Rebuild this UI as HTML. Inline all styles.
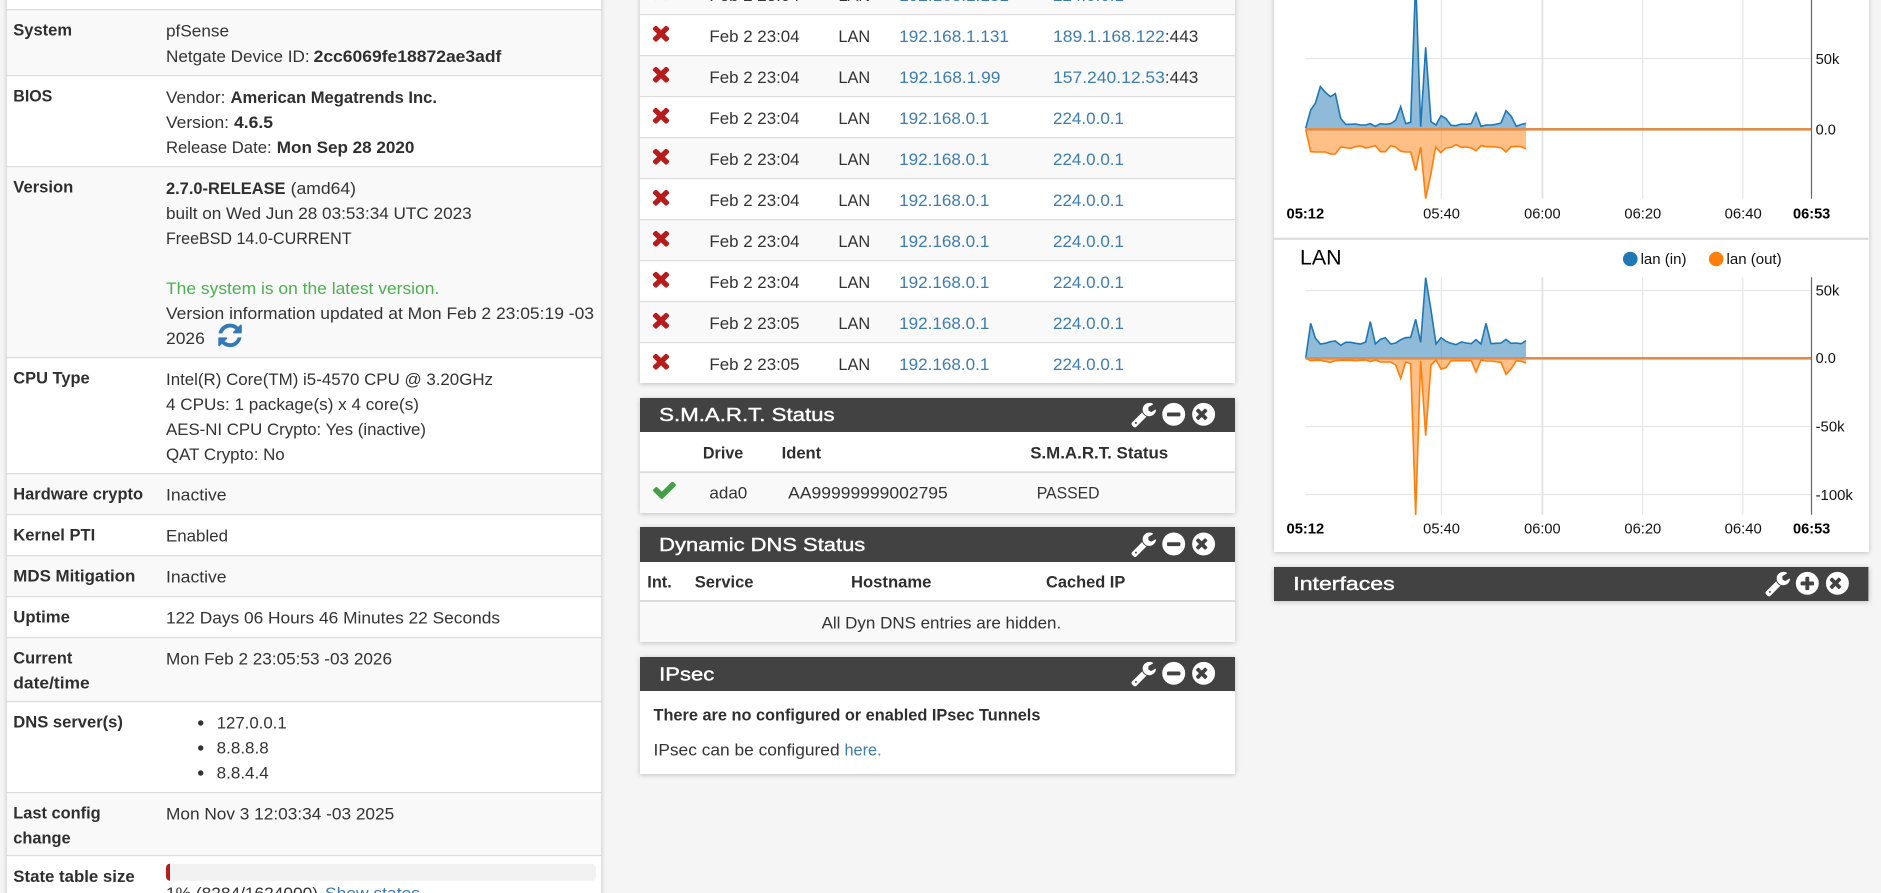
<!DOCTYPE html>
<html lang="en">
<head>
<meta charset="utf-8">
<title>pfSense Dashboard</title>
<style>
html,body{margin:0;padding:0;width:1881px;height:893px;overflow:hidden;background:#f5f5f5}
#r{position:relative;width:1881px;height:893px;overflow:hidden;background:#f5f5f5}
.p{position:absolute;background:#fff;box-shadow:0 1px 5px rgba(0,0,0,.22)}
svg{position:absolute;left:0;top:0}
text{font-family:"Liberation Sans",Arial,sans-serif;font-size:16.8px;fill:#333}
text:not(.c):not(.cb){transform:translateY(-.6px)}
.b{font-weight:700;fill:#2f2f2f}
.l{fill:#3f7cb0}
.t{font-size:18.6px;fill:#fff;stroke:#fff;stroke-width:.4px}
.c{font-size:14.4px;fill:#111}
.cb{font-size:14.4px;fill:#000;font-weight:700}
.g{stroke:#e6e6e6;stroke-width:1.2}
.a{stroke:#666;stroke-width:1.2}
</style>
</head>
<body>
<div id="r">
<div class="p" style="left:7px;top:-10px;width:594px;height:920px"></div>
<div class="p" style="left:640px;top:-10px;width:595px;height:393px"></div>
<div class="p" style="left:640px;top:398px;width:595px;height:115px"></div>
<div class="p" style="left:640px;top:527px;width:595px;height:115px"></div>
<div class="p" style="left:640px;top:657px;width:595px;height:117px"></div>
<div class="p" style="left:1274px;top:-10px;width:594.5px;height:562px"></div>
<div class="p" style="left:1274px;top:567px;width:594.5px;height:34px"></div>
<svg width="1881" height="893" viewBox="0 0 1881 893" xmlns="http://www.w3.org/2000/svg">
<defs>
<symbol id="x" viewBox="110 258 1188 1188" preserveAspectRatio="none"><path fill="#b71c1c" d="M1298 1214q0 40-28 68l-136 136q-28 28-68 28t-68-28l-294-294-294 294q-28 28-68 28t-68-28l-136-136q-28-28-28-68t28-68l294-294-294-294q-28-28-28-68t28-68l136-136q28-28 68-28t68 28l294 294 294-294q28-28 68-28t68 28l136 136q28 28 28 68t-28 68l-294 294 294 294q28 28 28 68z"/></symbol>
<symbol id="w" viewBox="0 0 1792 1792"><path fill="#fff" d="M448 1472q0-26-19-45t-45-19-45 19-19 45 19 45 45 19 45-19 19-45zm644-420l-682 682q-37 37-90 37-52 0-91-37l-106-108q-38-36-38-90 0-53 38-91l681-681q39 98 114.5 173.5t173.5 114.5zm634-435q0 39-23 106-47 134-164.5 217.5t-258.5 83.5q-185 0-316.5-131.5t-131.5-316.5 131.5-316.5 316.5-131.5q58 0 121.5 16.5t107.5 46.5q16 11 16 28t-16 28l-293 169v224l193 107q5-3 79-48.5t135.5-81 70.5-35.5q15 0 23.5 10t8.5 25z"/></symbol>
<symbol id="m" viewBox="0 0 1792 1792"><path fill="#fff" d="M1344 971v-128q0-26-19-45t-45-19h-768q-26 0-45 19t-19 45v128q0 26 19 45t45 19h768q26 0 45-19t19-45zm320-75q0 209-103 385.5t-279.5 279.5-385.5 103-385.5-103-279.5-279.5-103-385.5 103-385.5 279.5-279.5 385.5-103 385.5 103 279.5 279.5 103 385.5z"/></symbol>
<symbol id="pl" viewBox="0 0 1792 1792"><path fill="#fff" d="M1344 971v-128q0-26-19-45t-45-19h-256v-256q0-26-19-45t-45-19h-128q-26 0-45 19t-19 45v256h-256q-26 0-45 19t-19 45v128q0 26 19 45t45 19h256v256q0 26 19 45t45 19h128q26 0 45-19t19-45v-256h256q26 0 45-19t19-45zm320-75q0 209-103 385.5t-279.5 279.5-385.5 103-385.5-103-279.5-279.5-103-385.5 103-385.5 279.5-279.5 385.5-103 385.5 103 279.5 279.5 103 385.5z"/></symbol>
<symbol id="c" viewBox="0 0 1792 1792"><path fill="#fff" d="M1149 1122q0-26-19-45l-181-181 181-181q19-19 19-45 0-27-19-46l-90-90q-19-19-46-19-26 0-45 19l-181 181-181-181q-19-19-45-19-27 0-46 19l-90 90q-19 19-19 46 0 26 19 45l181 181-181 181q-19 19-19 45 0 27 19 46l90 90q19 19 46 19 26 0 45-19l181-181 181 181q19 19 45 19 27 0 46-19l90-90q19-19 19-46zm515-226q0 209-103 385.5t-279.5 279.5-385.5 103-385.5-103-279.5-279.5-103-385.5 103-385.5 279.5-279.5 385.5-103 385.5 103 279.5 279.5 103 385.5z"/></symbol>
</defs>

<!-- left table stripes -->
<g fill="#f9f9f9">
<rect x="7" y="9" width="594" height="66"/>
<rect x="7" y="166" width="594" height="191"/>
<rect x="7" y="473" width="594" height="41"/>
<rect x="7" y="555" width="594" height="41"/>
<rect x="7" y="637" width="594" height="64"/>
<rect x="7" y="792" width="594" height="63"/>
</g>
<g fill="#dcdcdc">
<rect x="7" y="9" width="594" height="1.2"/>
<rect x="7" y="75" width="594" height="1.2"/>
<rect x="7" y="166" width="594" height="1.2"/>
<rect x="7" y="357" width="594" height="1.2"/>
<rect x="7" y="473" width="594" height="1.2"/>
<rect x="7" y="514" width="594" height="1.2"/>
<rect x="7" y="555" width="594" height="1.2"/>
<rect x="7" y="596" width="594" height="1.2"/>
<rect x="7" y="637" width="594" height="1.2"/>
<rect x="7" y="701" width="594" height="1.2"/>
<rect x="7" y="792" width="594" height="1.2"/>
<rect x="7" y="855" width="594" height="1.2"/>
</g>

<!-- left labels -->
<text class="b" x="13.3" y="36" textLength="58.7" lengthAdjust="spacingAndGlyphs">System</text>
<text class="b" x="13.3" y="102" textLength="39" lengthAdjust="spacingAndGlyphs">BIOS</text>
<text class="b" x="13.3" y="193" textLength="60" lengthAdjust="spacingAndGlyphs">Version</text>
<text class="b" x="13.3" y="384" textLength="76.4" lengthAdjust="spacingAndGlyphs">CPU Type</text>
<text class="b" x="13.3" y="500" textLength="129.7" lengthAdjust="spacingAndGlyphs">Hardware crypto</text>
<text class="b" x="13.3" y="541" textLength="82" lengthAdjust="spacingAndGlyphs">Kernel PTI</text>
<text class="b" x="13.3" y="582" textLength="122" lengthAdjust="spacingAndGlyphs">MDS Mitigation</text>
<text class="b" x="13.3" y="623" textLength="56.6" lengthAdjust="spacingAndGlyphs">Uptime</text>
<text class="b" x="13.3" y="664" textLength="59" lengthAdjust="spacingAndGlyphs">Current</text>
<text class="b" x="13.3" y="689" textLength="76.4" lengthAdjust="spacingAndGlyphs">date/time</text>
<text class="b" x="13.3" y="728" textLength="109.6" lengthAdjust="spacingAndGlyphs">DNS server(s)</text>
<text class="b" x="13.3" y="819" textLength="87.4" lengthAdjust="spacingAndGlyphs">Last config</text>
<text class="b" x="13.3" y="844" textLength="57.3" lengthAdjust="spacingAndGlyphs">change</text>
<text class="b" x="13.3" y="882.6" textLength="121.4" lengthAdjust="spacingAndGlyphs">State table size</text>

<!-- left values -->
<text x="166" y="37" textLength="63" lengthAdjust="spacingAndGlyphs">pfSense</text>
<text x="166" y="62.5" textLength="143.6" lengthAdjust="spacingAndGlyphs">Netgate Device ID:</text>
<text class="b" x="313.6" y="62.5" textLength="187.8" lengthAdjust="spacingAndGlyphs">2cc6069fe18872ae3adf</text>
<text x="166" y="103.5" textLength="59.4" lengthAdjust="spacingAndGlyphs">Vendor:</text>
<text class="b" x="230.5" y="103.5" textLength="206.5" lengthAdjust="spacingAndGlyphs">American Megatrends Inc.</text>
<text x="166" y="128.5" textLength="63" lengthAdjust="spacingAndGlyphs">Version:</text>
<text class="b" x="234" y="128.5" textLength="39" lengthAdjust="spacingAndGlyphs">4.6.5</text>
<text x="166" y="153.5" textLength="105.6" lengthAdjust="spacingAndGlyphs">Release Date:</text>
<text class="b" x="276.8" y="153.5" textLength="137.6" lengthAdjust="spacingAndGlyphs">Mon Sep 28 2020</text>
<text class="b" x="166" y="194.5" textLength="119.5" lengthAdjust="spacingAndGlyphs">2.7.0-RELEASE</text>
<text x="290.6" y="194.5" textLength="65.4" lengthAdjust="spacingAndGlyphs">(amd64)</text>
<text x="166" y="219.5" textLength="305.7" lengthAdjust="spacingAndGlyphs">built on Wed Jun 28 03:53:34 UTC 2023</text>
<text x="166" y="244.5" textLength="185.5" lengthAdjust="spacingAndGlyphs">FreeBSD 14.0-CURRENT</text>
<text x="166" y="294.5" textLength="273.3" lengthAdjust="spacingAndGlyphs" style="fill:#4caf50">The system is on the latest version.</text>
<text x="166" y="319.5" textLength="428" lengthAdjust="spacingAndGlyphs">Version information updated at Mon Feb 2 23:05:19 -03</text>
<text x="166" y="344.5" textLength="38.8" lengthAdjust="spacingAndGlyphs">2026</text>
<svg x="216.3" y="321.6" width="27.5" height="27.5" viewBox="0 0 1792 1792"><path fill="#337ab7" d="M1639 1056q0 5-1 7-64 268-268 434.5t-478 166.5q-146 0-282.5-55t-243.5-157l-129 129q-19 19-45 19t-45-19-19-45v-448q0-26 19-45t45-19h448q26 0 45 19t19 45-19 45l-137 137q71 66 161 102t187 36q134 0 250-65t186-179q11-17 53-117 8-23 30-23h192q13 0 22.5 9.5t9.5 22.5zm25-800v448q0 26-19 45t-45 19h-448q-26 0-45-19t-19-45 19-45l138-138q-148-137-349-137-134 0-250 65t-186 179q-11 17-53 117-8 23-30 23h-199q-13 0-22.5-9.5t-9.5-22.5v-7q65-268 270-434.5t480-166.5q146 0 284 55.5t245 156.5l130-129q19-19 45-19t45 19 19 45z"/></svg>
<text x="166" y="385.5" textLength="327" lengthAdjust="spacingAndGlyphs">Intel(R) Core(TM) i5-4570 CPU @ 3.20GHz</text>
<text x="166" y="410.5" textLength="253" lengthAdjust="spacingAndGlyphs">4 CPUs: 1 package(s) x 4 core(s)</text>
<text x="166" y="435.5" textLength="260" lengthAdjust="spacingAndGlyphs">AES-NI CPU Crypto: Yes (inactive)</text>
<text x="166" y="460.5" textLength="118.7" lengthAdjust="spacingAndGlyphs">QAT Crypto: No</text>
<text x="166" y="501" textLength="60.6" lengthAdjust="spacingAndGlyphs">Inactive</text>
<text x="166" y="542" textLength="62" lengthAdjust="spacingAndGlyphs">Enabled</text>
<text x="166" y="583" textLength="60.6" lengthAdjust="spacingAndGlyphs">Inactive</text>
<text x="166" y="624" textLength="334" lengthAdjust="spacingAndGlyphs">122 Days 06 Hours 46 Minutes 22 Seconds</text>
<text x="166" y="665" textLength="226" lengthAdjust="spacingAndGlyphs">Mon Feb 2 23:05:53 -03 2026</text>
<circle cx="200.7" cy="723" r="2.7" fill="#333"/>
<circle cx="200.7" cy="748" r="2.7" fill="#333"/>
<circle cx="200.7" cy="773" r="2.7" fill="#333"/>
<text x="216.7" y="729" textLength="70" lengthAdjust="spacingAndGlyphs">127.0.0.1</text>
<text x="216.7" y="754" textLength="52" lengthAdjust="spacingAndGlyphs">8.8.8.8</text>
<text x="216.7" y="779" textLength="52" lengthAdjust="spacingAndGlyphs">8.8.4.4</text>
<text x="166" y="820" textLength="228.2" lengthAdjust="spacingAndGlyphs">Mon Nov 3 12:03:34 -03 2025</text>
<rect x="166" y="863.7" width="430" height="17" rx="4" fill="#f2f2f2"/>
<path d="M170 863.7h-.5a4 4 0 0 0-3.500 4v9a4 4 0 0 0 3.500 4h.5z" fill="#b71c1c"/>
<text x="166" y="899.5" textLength="152" lengthAdjust="spacingAndGlyphs">1% (8284/1624000)</text>
<text class="l" x="325" y="899.5" textLength="95" lengthAdjust="spacingAndGlyphs">Show states</text>

<!-- center log table -->
<g fill="#f9f9f9">
<rect x="640" y="0" width="595" height="14"/>
<rect x="640" y="55" width="595" height="41"/>
<rect x="640" y="137" width="595" height="41"/>
<rect x="640" y="219" width="595" height="41"/>
<rect x="640" y="301" width="595" height="41"/>
</g>
<g fill="#dcdcdc">
<rect x="640" y="14" width="595" height="1.2"/>
<rect x="640" y="55" width="595" height="1.2"/>
<rect x="640" y="96" width="595" height="1.2"/>
<rect x="640" y="137" width="595" height="1.2"/>
<rect x="640" y="178" width="595" height="1.2"/>
<rect x="640" y="219" width="595" height="1.2"/>
<rect x="640" y="260" width="595" height="1.2"/>
<rect x="640" y="301" width="595" height="1.2"/>
<rect x="640" y="342" width="595" height="1.2"/>
</g>
<use href="#x" x="652.7" y="-15.8" width="16.6" height="16"/>
<use href="#x" x="652.7" y="25.7" width="16.6" height="16"/>
<use href="#x" x="652.7" y="66.7" width="16.6" height="16"/>
<use href="#x" x="652.7" y="107.7" width="16.6" height="16"/>
<use href="#x" x="652.7" y="148.7" width="16.6" height="16"/>
<use href="#x" x="652.7" y="189.7" width="16.6" height="16"/>
<use href="#x" x="652.7" y="230.7" width="16.6" height="16"/>
<use href="#x" x="652.7" y="271.7" width="16.6" height="16"/>
<use href="#x" x="652.7" y="312.7" width="16.6" height="16"/>
<use href="#x" x="652.7" y="353.7" width="16.6" height="16"/>

<text x="709.4" y="1.8" textLength="90.2" lengthAdjust="spacingAndGlyphs">Feb 2 23:04</text>
<text x="838.4" y="1.8" textLength="31.8" lengthAdjust="spacingAndGlyphs">LAN</text>
<text class="l" x="899.2" y="1.8" textLength="109.8" lengthAdjust="spacingAndGlyphs">192.168.1.131</text>
<text class="l" x="1053" y="1.8" textLength="71" lengthAdjust="spacingAndGlyphs">224.0.0.1</text>

<text x="709.4" y="42.6" textLength="90.2" lengthAdjust="spacingAndGlyphs">Feb 2 23:04</text>
<text x="838.4" y="42.6" textLength="31.8" lengthAdjust="spacingAndGlyphs">LAN</text>
<text class="l" x="899.2" y="42.6" textLength="109.8" lengthAdjust="spacingAndGlyphs">192.168.1.131</text>
<text class="l" x="1053" y="42.6" textLength="111.9" lengthAdjust="spacingAndGlyphs">189.1.168.122</text>
<text x="1164.9" y="42.6" textLength="33.5" lengthAdjust="spacingAndGlyphs">:443</text>

<text x="709.4" y="83.6" textLength="90.2" lengthAdjust="spacingAndGlyphs">Feb 2 23:04</text>
<text x="838.4" y="83.6" textLength="31.8" lengthAdjust="spacingAndGlyphs">LAN</text>
<text class="l" x="899.2" y="83.6" textLength="101.2" lengthAdjust="spacingAndGlyphs">192.168.1.99</text>
<text class="l" x="1053" y="83.6" textLength="111.9" lengthAdjust="spacingAndGlyphs">157.240.12.53</text>
<text x="1164.9" y="83.6" textLength="33.5" lengthAdjust="spacingAndGlyphs">:443</text>

<text x="709.4" y="124.6" textLength="90.2" lengthAdjust="spacingAndGlyphs">Feb 2 23:04</text>
<text x="838.4" y="124.6" textLength="31.8" lengthAdjust="spacingAndGlyphs">LAN</text>
<text class="l" x="899.2" y="124.6" textLength="90.2" lengthAdjust="spacingAndGlyphs">192.168.0.1</text>
<text class="l" x="1053" y="124.6" textLength="71" lengthAdjust="spacingAndGlyphs">224.0.0.1</text>

<text x="709.4" y="165.6" textLength="90.2" lengthAdjust="spacingAndGlyphs">Feb 2 23:04</text>
<text x="838.4" y="165.6" textLength="31.8" lengthAdjust="spacingAndGlyphs">LAN</text>
<text class="l" x="899.2" y="165.6" textLength="90.2" lengthAdjust="spacingAndGlyphs">192.168.0.1</text>
<text class="l" x="1053" y="165.6" textLength="71" lengthAdjust="spacingAndGlyphs">224.0.0.1</text>

<text x="709.4" y="206.6" textLength="90.2" lengthAdjust="spacingAndGlyphs">Feb 2 23:04</text>
<text x="838.4" y="206.6" textLength="31.8" lengthAdjust="spacingAndGlyphs">LAN</text>
<text class="l" x="899.2" y="206.6" textLength="90.2" lengthAdjust="spacingAndGlyphs">192.168.0.1</text>
<text class="l" x="1053" y="206.6" textLength="71" lengthAdjust="spacingAndGlyphs">224.0.0.1</text>

<text x="709.4" y="247.6" textLength="90.2" lengthAdjust="spacingAndGlyphs">Feb 2 23:04</text>
<text x="838.4" y="247.6" textLength="31.8" lengthAdjust="spacingAndGlyphs">LAN</text>
<text class="l" x="899.2" y="247.6" textLength="90.2" lengthAdjust="spacingAndGlyphs">192.168.0.1</text>
<text class="l" x="1053" y="247.6" textLength="71" lengthAdjust="spacingAndGlyphs">224.0.0.1</text>

<text x="709.4" y="288.6" textLength="90.2" lengthAdjust="spacingAndGlyphs">Feb 2 23:04</text>
<text x="838.4" y="288.6" textLength="31.8" lengthAdjust="spacingAndGlyphs">LAN</text>
<text class="l" x="899.2" y="288.6" textLength="90.2" lengthAdjust="spacingAndGlyphs">192.168.0.1</text>
<text class="l" x="1053" y="288.6" textLength="71" lengthAdjust="spacingAndGlyphs">224.0.0.1</text>

<text x="709.4" y="329.6" textLength="90.2" lengthAdjust="spacingAndGlyphs">Feb 2 23:05</text>
<text x="838.4" y="329.6" textLength="31.8" lengthAdjust="spacingAndGlyphs">LAN</text>
<text class="l" x="899.2" y="329.6" textLength="90.2" lengthAdjust="spacingAndGlyphs">192.168.0.1</text>
<text class="l" x="1053" y="329.6" textLength="71" lengthAdjust="spacingAndGlyphs">224.0.0.1</text>

<text x="709.4" y="370.6" textLength="90.2" lengthAdjust="spacingAndGlyphs">Feb 2 23:05</text>
<text x="838.4" y="370.6" textLength="31.8" lengthAdjust="spacingAndGlyphs">LAN</text>
<text class="l" x="899.2" y="370.6" textLength="90.2" lengthAdjust="spacingAndGlyphs">192.168.0.1</text>
<text class="l" x="1053" y="370.6" textLength="71" lengthAdjust="spacingAndGlyphs">224.0.0.1</text>

<!-- S.M.A.R.T. -->
<rect x="640" y="398" width="595" height="34" fill="#424242"/>
<text class="t" x="659.2" y="421.7" textLength="175.5" lengthAdjust="spacingAndGlyphs">S.M.A.R.T. Status</text>
<use href="#w" x="1130.2" y="400.9" width="26.8" height="26.8"/>
<use href="#m" x="1160.3" y="400.9" width="26.8" height="26.8"/>
<use href="#c" x="1190.2" y="400.9" width="26.8" height="26.8"/>
<text class="b" x="702.9" y="459" textLength="40.4" lengthAdjust="spacingAndGlyphs">Drive</text>
<text class="b" x="781.6" y="459" textLength="39.6" lengthAdjust="spacingAndGlyphs">Ident</text>
<text class="b" x="1030.2" y="459" textLength="138" lengthAdjust="spacingAndGlyphs">S.M.A.R.T. Status</text>
<rect x="640" y="471.2" width="595" height="2" fill="#dcdcdc"/>
<rect x="640" y="473.2" width="595" height="39.8" fill="#f9f9f9"/>
<svg x="653" y="481.7" width="22.9" height="17.3" viewBox="121 334 1550 1188" preserveAspectRatio="none"><path fill="#43a047" d="M1671 566q0 40-28 68l-724 724-136 136q-28 28-68 28t-68-28l-136-136-362-362q-28-28-28-68t28-68l136-136q28-28 68-28t68 28l294 295 656-657q28-28 68-28t68 28l136 136q28 28 28 68z"/></svg>
<text x="709.4" y="499" textLength="37.9" lengthAdjust="spacingAndGlyphs">ada0</text>
<text x="788.2" y="499" textLength="159.6" lengthAdjust="spacingAndGlyphs">AA99999999002795</text>
<text x="1036.7" y="499" textLength="62.9" lengthAdjust="spacingAndGlyphs">PASSED</text>

<!-- Dynamic DNS -->
<rect x="640" y="527" width="595" height="35" fill="#424242"/>
<text class="t" x="659.2" y="551.7" textLength="206.1" lengthAdjust="spacingAndGlyphs">Dynamic DNS Status</text>
<use href="#w" x="1130.2" y="530.6" width="26.8" height="26.8"/>
<use href="#m" x="1160.3" y="530.6" width="26.8" height="26.8"/>
<use href="#c" x="1190.2" y="530.6" width="26.8" height="26.8"/>
<text class="b" x="647.3" y="588" textLength="24.5" lengthAdjust="spacingAndGlyphs">Int.</text>
<text class="b" x="694.7" y="588" textLength="58.8" lengthAdjust="spacingAndGlyphs">Service</text>
<text class="b" x="851" y="588" textLength="80.4" lengthAdjust="spacingAndGlyphs">Hostname</text>
<text class="b" x="1046" y="588" textLength="79.3" lengthAdjust="spacingAndGlyphs">Cached IP</text>
<rect x="640" y="600" width="595" height="2" fill="#dcdcdc"/>
<rect x="640" y="602" width="595" height="40" fill="#f9f9f9"/>
<text x="821.6" y="629.3" textLength="239.6" lengthAdjust="spacingAndGlyphs">All Dyn DNS entries are hidden.</text>

<!-- IPsec -->
<rect x="640" y="657" width="595" height="34" fill="#424242"/>
<text class="t" x="659.2" y="681" textLength="55.1" lengthAdjust="spacingAndGlyphs">IPsec</text>
<use href="#w" x="1130.2" y="659.9" width="26.8" height="26.8"/>
<use href="#m" x="1160.3" y="659.9" width="26.8" height="26.8"/>
<use href="#c" x="1190.2" y="659.9" width="26.8" height="26.8"/>
<text class="b" x="653.5" y="721" textLength="386.9" lengthAdjust="spacingAndGlyphs">There are no configured or enabled IPsec Tunnels</text>
<text x="653.5" y="756" textLength="186.1" lengthAdjust="spacingAndGlyphs">IPsec can be configured</text>
<text class="l" x="844.5" y="756" textLength="37.1" lengthAdjust="spacingAndGlyphs">here.</text>

<!-- chart 1 -->
<path class="g" d="M1441.4 0V198.7M1642.6 0V198.7M1742.8 0V198.7M1305.5 58.5H1811"/>
<path d="M1542.4 0V198.7" stroke="#e2e2e2" stroke-width="1.8"/>
<g transform="translate(1300,0) scale(.33333)">
<polygon fill="#1f77b4" fill-opacity=".5" points="17,388 17,385 32,330 46,310 61,260 76,277 91,290 106,281 122,355 137,373 152,373 167,372 182,375 197,375 211,371 226,379 241,371 256,373 272,371 287,361 302,320 317,371 332,367 347,-60 362,380 377,142 393,365 408,375 423,347 438,356 453,376 468,377 484,372 499,373 514,371 528,339 543,379 558,375 573,375 588,373 603,369 618,332 633,348 649,379 664,373 678,370 678,388"/>
<polyline fill="none" stroke="#1f77b4" stroke-width="1.6" vector-effect="non-scaling-stroke" points="17,385 32,330 46,310 61,260 76,277 91,290 106,281 122,355 137,373 152,373 167,372 182,375 197,375 211,371 226,379 241,371 256,373 272,371 287,361 302,320 317,371 332,367 347,-60 362,380 377,142 393,365 408,375 423,347 438,356 453,376 468,377 484,372 499,373 514,371 528,339 543,379 558,375 573,375 588,373 603,369 618,332 633,348 649,379 664,373 678,370"/>
<polygon fill="#ff7f0e" fill-opacity=".5" points="17,388 32,455 46,456 61,456 76,456 91,462 106,462 122,441 137,443 152,445 167,440 182,438 197,444 211,441 226,437 241,455 256,455 272,437 287,441 302,454 317,456 332,456 347,512 362,441 377,596 393,520 407,441 422,458 438,444 453,442 468,434 484,442 499,441 514,444 528,452 543,437 558,440 573,440 588,441 603,443 618,456 633,440 649,439 664,440 678,447 678,388"/>
<polyline fill="none" stroke="#ff7f0e" stroke-width="1.6" vector-effect="non-scaling-stroke" points="17,388 32,455 46,456 61,456 76,456 91,462 106,462 122,441 137,443 152,445 167,440 182,438 197,444 211,441 226,437 241,455 256,455 272,437 287,441 302,454 317,456 332,456 347,512 362,441 377,596 393,520 407,441 422,458 438,444 453,442 468,434 484,442 499,441 514,444 528,452 543,437 558,440 573,440 588,441 603,443 618,456 633,440 649,439 664,440 678,447"/>
</g>
<path d="M1305.5 129.3H1811" stroke="#e08c4c" stroke-width="2.6"/>
<path class="a" d="M1811.5 0V198.7"/>
<text class="c" x="1815.6" y="64" textLength="23.8" lengthAdjust="spacingAndGlyphs">50k</text>
<text class="c" x="1815.6" y="134.7" textLength="20.2" lengthAdjust="spacingAndGlyphs">0.0</text>
<text class="cb" x="1286.5" y="218.3" textLength="37.7" lengthAdjust="spacingAndGlyphs">05:12</text>
<text class="c" x="1423.2" y="218.3" textLength="36.8" lengthAdjust="spacingAndGlyphs">05:40</text>
<text class="c" x="1524.2" y="218.3" textLength="36.4" lengthAdjust="spacingAndGlyphs">06:00</text>
<text class="c" x="1624.4" y="218.3" textLength="36.8" lengthAdjust="spacingAndGlyphs">06:20</text>
<text class="c" x="1724.6" y="218.3" textLength="37.2" lengthAdjust="spacingAndGlyphs">06:40</text>
<text class="cb" x="1793" y="218.3" textLength="37.3" lengthAdjust="spacingAndGlyphs">06:53</text>

<rect x="1274" y="237.7" width="594.5" height="2.2" fill="#dcdcdc"/>

<!-- chart 2 -->
<text x="1300" y="265.3" textLength="41.6" lengthAdjust="spacingAndGlyphs" style="font-size:21.4px;fill:#000">LAN</text>
<circle cx="1630.3" cy="259" r="7.3" fill="#1f77b4"/>
<text class="c" x="1640.6" y="264" textLength="45.9" lengthAdjust="spacingAndGlyphs">lan (in)</text>
<circle cx="1716.2" cy="259" r="7.3" fill="#ff7f0e"/>
<text class="c" x="1726.5" y="264" textLength="55.1" lengthAdjust="spacingAndGlyphs">lan (out)</text>
<path class="g" d="M1441.4 277.3V514.7M1642.6 277.3V514.7M1742.8 277.3V514.7M1305.5 290.5H1811M1305.5 426.5H1811M1305.5 494.5H1811"/>
<path d="M1542.4 277.3V514.7" stroke="#e2e2e2" stroke-width="1.8"/>
<g transform="translate(1300,270) scale(.33333)">
<polygon fill="#1f77b4" fill-opacity=".5" points="17,265 32,160 46,204 61,222 76,220 91,215 106,213 122,226 137,217 152,217 167,220 182,222 197,216 211,155 226,222 241,208 256,203 272,222 287,219 302,209 317,203 332,202 347,148 362,217 377,23 393,120 408,222 423,203 438,214 453,220 468,224 484,216 499,219 514,221 528,209 543,222 558,160 573,221 588,220 603,219 618,208 633,220 649,219 664,221 678,212 678,265"/>
<polyline fill="none" stroke="#1f77b4" stroke-width="1.6" vector-effect="non-scaling-stroke" points="17,265 32,160 46,204 61,222 76,220 91,215 106,213 122,226 137,217 152,217 167,220 182,222 197,216 211,155 226,222 241,208 256,203 272,222 287,219 302,209 317,203 332,202 347,148 362,217 377,23 393,120 408,222 423,203 438,214 453,220 468,224 484,216 499,219 514,221 528,209 543,222 558,160 573,221 588,220 603,219 618,208 633,220 649,219 664,221 678,212"/>
<polygon fill="#ff7f0e" fill-opacity=".5" points="17,265 32,272 46,271 61,271 76,274 91,277 106,272 122,271 137,271 152,271 167,272 182,271 197,270 211,275 226,270 241,276 256,276 272,276 287,285 302,325 317,276 332,281 347,735 362,272 377,497 393,285 408,270 423,297 438,293 453,272 468,272 484,272 499,272 514,272 528,306 543,270 558,273 573,273 588,275 603,277 618,313 633,297 649,272 664,274 678,279 678,265"/>
<polyline fill="none" stroke="#ff7f0e" stroke-width="1.6" vector-effect="non-scaling-stroke" points="17,265 32,272 46,271 61,271 76,274 91,277 106,272 122,271 137,271 152,271 167,272 182,271 197,270 211,275 226,270 241,276 256,276 272,276 287,285 302,325 317,276 332,281 347,735 362,272 377,497 393,285 408,270 423,297 438,293 453,272 468,272 484,272 499,272 514,272 528,306 543,270 558,273 573,273 588,275 603,277 618,313 633,297 649,272 664,274 678,279"/>
</g>
<path d="M1305.5 358.3H1811" stroke="#e08c4c" stroke-width="2.6"/>
<path class="a" d="M1811.5 277.3V514.7"/>
<text class="c" x="1815.6" y="295.3" textLength="23.8" lengthAdjust="spacingAndGlyphs">50k</text>
<text class="c" x="1815.6" y="363" textLength="20.2" lengthAdjust="spacingAndGlyphs">0.0</text>
<text class="c" x="1815.6" y="431.3" textLength="29" lengthAdjust="spacingAndGlyphs">-50k</text>
<text class="c" x="1815.6" y="500" textLength="37.3" lengthAdjust="spacingAndGlyphs">-100k</text>
<text class="cb" x="1286.5" y="533.7" textLength="37.7" lengthAdjust="spacingAndGlyphs">05:12</text>
<text class="c" x="1423.2" y="533.7" textLength="36.8" lengthAdjust="spacingAndGlyphs">05:40</text>
<text class="c" x="1524.2" y="533.7" textLength="36.4" lengthAdjust="spacingAndGlyphs">06:00</text>
<text class="c" x="1624.4" y="533.7" textLength="36.8" lengthAdjust="spacingAndGlyphs">06:20</text>
<text class="c" x="1724.6" y="533.7" textLength="37.2" lengthAdjust="spacingAndGlyphs">06:40</text>
<text class="cb" x="1793" y="533.7" textLength="37.3" lengthAdjust="spacingAndGlyphs">06:53</text>

<!-- Interfaces -->
<rect x="1274" y="567" width="594.5" height="34" fill="#424242"/>
<text class="t" x="1293.3" y="590.7" textLength="101.4" lengthAdjust="spacingAndGlyphs">Interfaces</text>
<use href="#w" x="1764.2" y="569.9" width="26.8" height="26.8"/>
<use href="#pl" x="1793.9" y="569.9" width="26.8" height="26.8"/>
<use href="#c" x="1824" y="569.9" width="26.8" height="26.8"/>
</svg>
</div>
</body>
</html>
